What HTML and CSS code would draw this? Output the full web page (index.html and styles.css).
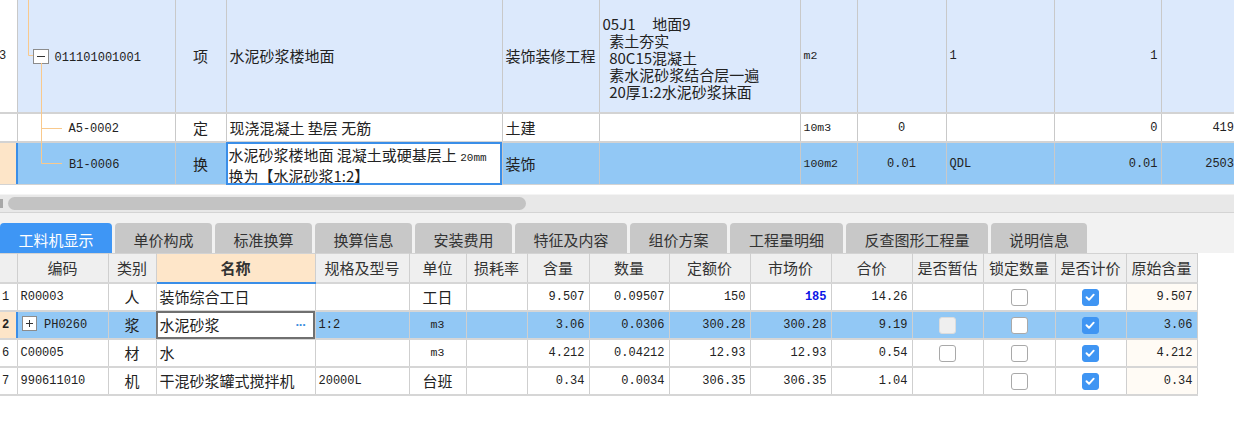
FILE: index.html
```html
<!DOCTYPE html>
<html lang="zh-CN">
<head>
<meta charset="utf-8">
<link rel="stylesheet" href="styles.css">
</head>
<body>
<div class="page">
  <div class="top">
    <table class="grid top-grid">
      <colgroup>
        <col style="width:17px"><col style="width:158px"><col style="width:51px"><col style="width:276px"><col style="width:97px"><col style="width:201px"><col style="width:57px"><col style="width:89px"><col style="width:108px"><col style="width:107px"><col style="width:74px">
      </colgroup>
      <tr class="r-item">
        <td class="num num-cut">3</td>
        <td class="code lvl1"><span class="tbox minus"></span><span class="mono">011101001001</span></td>
        <td class="c">项</td>
        <td>水泥砂浆楼地面</td>
        <td>装饰装修工程</td>
        <td class="feat">05J1     地面9
  素土夯实
  80C15混凝土
  素水泥砂浆结合层一遍
  20厚1:2水泥砂浆抹面</td>
        <td class="mono sm">m2</td>
        <td></td>
        <td class="mono">1</td>
        <td class="mono r">1</td>
        <td></td>
      </tr>
      <tr class="r-plain">
        <td class="num"></td>
        <td class="code lvl2"><span class="mono">A5-0002</span></td>
        <td class="c">定</td>
        <td>现浇混凝土 垫层 无筋</td>
        <td>土建</td>
        <td></td>
        <td class="mono sm">10m3</td>
        <td class="mono c">0</td>
        <td></td>
        <td class="mono r">0</td>
        <td class="mono last">419</td>
      </tr>
      <tr class="r-sel">
        <td class="num cur"></td>
        <td class="code lvl2"><span class="mono">B1-0006</span></td>
        <td class="c">换</td>
        <td class="edit-blue"><div class="two">水泥砂浆楼地面 混凝土或硬基层上 <span class="mono tiny">20mm</span><br> 换为【水泥砂浆1:2】</div></td>
        <td>装饰</td>
        <td></td>
        <td class="mono sm">100m2</td>
        <td class="mono c">0.01</td>
        <td class="mono">QDL</td>
        <td class="mono r">0.01</td>
        <td class="mono last">2503</td>
      </tr>
    </table>
    <svg class="tree" width="60" height="184" viewBox="0 0 60 184">
      <path d="M11.5 0V55.5H16" fill="none" stroke="#f9c98c" stroke-width="1"/>
      <path d="M24.5 63V163.5H45M24.5 128.5H45" fill="none" stroke="#f9c98c" stroke-width="1"/>
    </svg>
  </div>

  <div class="hscroll"><span class="hs-end"></span><span class="hs-thumb"></span></div>

  <div class="tabbar">
    <span class="tab active">工料机显示</span>
    <span class="tab">单价构成</span>
    <span class="tab">标准换算</span>
    <span class="tab">换算信息</span>
    <span class="tab">安装费用</span>
    <span class="tab w112">特征及内容</span>
    <span class="tab">组价方案</span>
    <span class="tab w113">工程量明细</span>
    <span class="tab w142">反查图形工程量</span>
    <span class="tab w96">说明信息</span>
  </div>

  <table class="grid bot-grid">
    <colgroup>
      <col style="width:17px"><col style="width:91px"><col style="width:48px"><col style="width:159px"><col style="width:94px"><col style="width:57px"><col style="width:61px"><col style="width:62px"><col style="width:80px"><col style="width:81px"><col style="width:81px"><col style="width:81px"><col style="width:71px"><col style="width:72px"><col style="width:71px"><col style="width:71px">
    </colgroup>
    <tr class="head">
      <td></td><td>编码</td><td>类别</td><td class="hl">名称</td><td>规格及型号</td><td>单位</td><td>损耗率</td><td>含量</td><td>数量</td><td>定额价</td><td>市场价</td><td>合价</td><td>是否暂估</td><td>锁定数量</td><td>是否计价</td><td>原始含量</td>
    </tr>
    <tr>
      <td class="num">1</td><td class="mono">R00003</td><td class="c">人</td><td>装饰综合工日</td><td></td><td class="c">工日</td><td></td>
      <td class="mono r">9.507</td><td class="mono r">0.09507</td><td class="mono r">150</td><td class="mono r blue">185</td><td class="mono r">14.26</td>
      <td></td><td class="c"><span class="cb"></span></td><td class="c"><span class="cb on"><svg viewBox="0 0 16 16"><path d="M4 8.3l2.9 2.9L12.2 5.4" fill="none" stroke="#fff" stroke-width="2.2" stroke-linecap="round" stroke-linejoin="round"/></svg></span></td><td class="mono r orig">9.507</td>
    </tr>
    <tr class="r-sel">
      <td class="num cur b">2</td><td class="mono"><span class="tbox plus"></span>PH0260</td><td class="c">浆</td><td class="edit-grey"><span>水泥砂浆</span><span class="dots">···</span></td><td class="mono">1:2</td><td class="mono c sm">m3</td><td></td>
      <td class="mono r">3.06</td><td class="mono r">0.0306</td><td class="mono r">300.28</td><td class="mono r">300.28</td><td class="mono r">9.19</td>
      <td class="c"><span class="cb dis"></span></td><td class="c"><span class="cb wb"></span></td><td class="c"><span class="cb on"><svg viewBox="0 0 16 16"><path d="M4 8.3l2.9 2.9L12.2 5.4" fill="none" stroke="#fff" stroke-width="2.2" stroke-linecap="round" stroke-linejoin="round"/></svg></span></td><td class="mono r">3.06</td>
    </tr>
    <tr>
      <td class="num">6</td><td class="mono">C00005</td><td class="c">材</td><td>水</td><td></td><td class="mono c sm">m3</td><td></td>
      <td class="mono r">4.212</td><td class="mono r">0.04212</td><td class="mono r">12.93</td><td class="mono r">12.93</td><td class="mono r">0.54</td>
      <td class="c"><span class="cb"></span></td><td class="c"><span class="cb"></span></td><td class="c"><span class="cb on"><svg viewBox="0 0 16 16"><path d="M4 8.3l2.9 2.9L12.2 5.4" fill="none" stroke="#fff" stroke-width="2.2" stroke-linecap="round" stroke-linejoin="round"/></svg></span></td><td class="mono r orig">4.212</td>
    </tr>
    <tr>
      <td class="num">7</td><td class="mono">990611010</td><td class="c">机</td><td>干混砂浆罐式搅拌机</td><td class="mono">20000L</td><td class="c">台班</td><td></td>
      <td class="mono r">0.34</td><td class="mono r">0.0034</td><td class="mono r">306.35</td><td class="mono r">306.35</td><td class="mono r">1.04</td>
      <td></td><td class="c"><span class="cb"></span></td><td class="c"><span class="cb on"><svg viewBox="0 0 16 16"><path d="M4 8.3l2.9 2.9L12.2 5.4" fill="none" stroke="#fff" stroke-width="2.2" stroke-linecap="round" stroke-linejoin="round"/></svg></span></td><td class="mono r orig">0.34</td>
    </tr>
  </table>
</div>
</body>
</html>
```

FILE: styles.css
```css
* { box-sizing: border-box; }
html, body { margin: 0; padding: 0; }
body {
  width: 1234px;
  height: 429px;
  overflow: hidden;
  background: #fff;
  font-family: "Noto Sans CJK SC", "Microsoft YaHei", sans-serif;
  font-size: 15px;
  color: #222;
}
.page { width: 1234px; overflow: hidden; }

.grid { border-collapse: collapse; table-layout: fixed; }
.grid td {
  padding: 0 3px;
  white-space: nowrap;
  overflow: hidden;
  vertical-align: middle;
  line-height: 18px;
  border-left: 1px solid #c9c9c9;
  border-right: 1px solid #c9c9c9;
  border-bottom: 2px solid #d3d3d3;
}
.mono { font-family: "Liberation Mono", "DejaVu Sans Mono", monospace; font-size: 12px; color: #222; }
.sm { font-size: 11.5px; }
.tiny { font-size: 11px; }
.c { text-align: center; }
.r { text-align: right; }
.b { font-weight: bold; }

/* top grid */
.top { position: relative; width: 1234px; overflow: hidden; height: 185px; }
.top-grid { width: 1235px; }
.top-grid td:first-child { border-left: none; }
.top-grid td:last-child { border-right: none; }
.r-item td { height: 113px; background: #dce9fc; }
.r-item td.num { background: #fff; }
.r-plain td { height: 29px; background: #fff; }
.top-grid .r-sel td { height: 41px; }
.r-sel td { background: #92c8f5; }
.num { padding: 0 0 0 2px !important; font-family: "Liberation Mono", monospace; font-size: 12px; }
.num-cut { text-indent: -3px; }
.num.cur { background: #fde5c8 !important; border-right: 2px solid #3a8ee8 !important; }
.code.lvl1 { padding-left: 15px; }
.code.lvl2 { padding-left: 51px; }
.tbox {
  display: inline-block;
  width: 16px;
  height: 15px;
  border: 1px solid #8c8c8c;
  background: #fff;
  vertical-align: -3px;
  margin-right: 6px;
  position: relative;
}
.tbox::before { content: ""; position: absolute; left: 3px; right: 3px; top: 6px; height: 1px; background: #333; }
.tbox.plus { width: 15px; margin-left: 1px; margin-right: 7px; }
.tbox.plus::after { content: ""; position: absolute; top: 3px; bottom: 3px; left: 6px; width: 1px; background: #333; }
.feat { white-space: pre !important; line-height: 17px !important; padding-top: 2px !important; }
.last { text-align: right; padding: 0 1px 0 0 !important; }
.edit-blue { background: #fff !important; outline: 2px solid #3a8ee8; outline-offset: -2px; padding: 0 2px !important; vertical-align: top !important; }
.two { line-height: 17px; padding-top: 3px; }
.tree { position: absolute; left: 17px; top: 0; pointer-events: none; }

/* scrollbar */
.hscroll {
  margin-top: 9px;
  height: 19px;
  background: #e8e8e8;
  border-top: 1px solid #f4f4f4;
  border-bottom: 1px solid #d4d4d4;
  display: flex;
  align-items: center;
}
.hs-end { width: 3px; height: 9px; background: #a8a8a8; }
.hs-thumb { margin-left: 5px; width: 518px; height: 13px; border-radius: 7px; background: #c3c3c3; }

/* tabs */
.tabbar {
  background: #f2f2f2;
  padding-top: 9px;
  display: flex;
  gap: 3px;
  height: 40px;
  align-items: flex-end;
}
.tab {
  width: 97px;
  height: 30px;
  background: #c8c8c8;
  border-radius: 4px 4px 0 0;
  color: #333;
  font-size: 15px;
  display: flex;
  align-items: center;
  justify-content: center;
  padding-top: 2px;
}
.tab.active { width: 112px; background: #3e96f5; color: #fff; }
.tab.w112 { width: 112px; }
.tab.w113 { width: 113px; }
.tab.w142 { width: 142px; }
.tab.w96 { width: 96px; }

/* bottom grid */
.bot-grid { width: 1197px; border-top: 1px solid #d3d3d3; }
.bot-grid td { border-left: 1px solid #cfcfcf; border-right: 1px solid #cfcfcf; border-bottom: 2px solid #d6d6d6; height: 28px; }
.bot-grid td:first-child { border-left: none; }
.head td { height: 29px; background: #efefef; text-align: center; color: #333; }
.head td.hl { background: #fee6c9; font-weight: bold; border-bottom: 2px solid #3a8ee8; }
.bot-grid .r-sel td { background: #92c8f5; }
.bot-grid .num { font-size: 12px; }
.bot-grid .mono.r { padding-right: 4px; }
.blue { color: #0a14e6 !important; font-weight: bold; }
.orig { background: #fffbf5; }
.edit-grey { background: #fff !important; outline: 2px solid #707070; outline-offset: -2px; }
.edit-grey .dots { float: right; color: #3e8ee0; font-family: "Liberation Sans", sans-serif; font-size: 13px; font-weight: bold; letter-spacing: -1px; margin-right: 6px; }
.cb {
  display: inline-block;
  width: 17px;
  height: 17px;
  border: 1.5px solid #a9a9a9;
  border-radius: 3px;
  background: #fff;
  vertical-align: middle;
}
.cb.dis { background: #efefef; border-color: #dcdcdc; }
.cb.on { background: #3f95f3; border-color: #3f95f3; }
.cb svg { display: block; width: 14px; height: 14px; }
```
